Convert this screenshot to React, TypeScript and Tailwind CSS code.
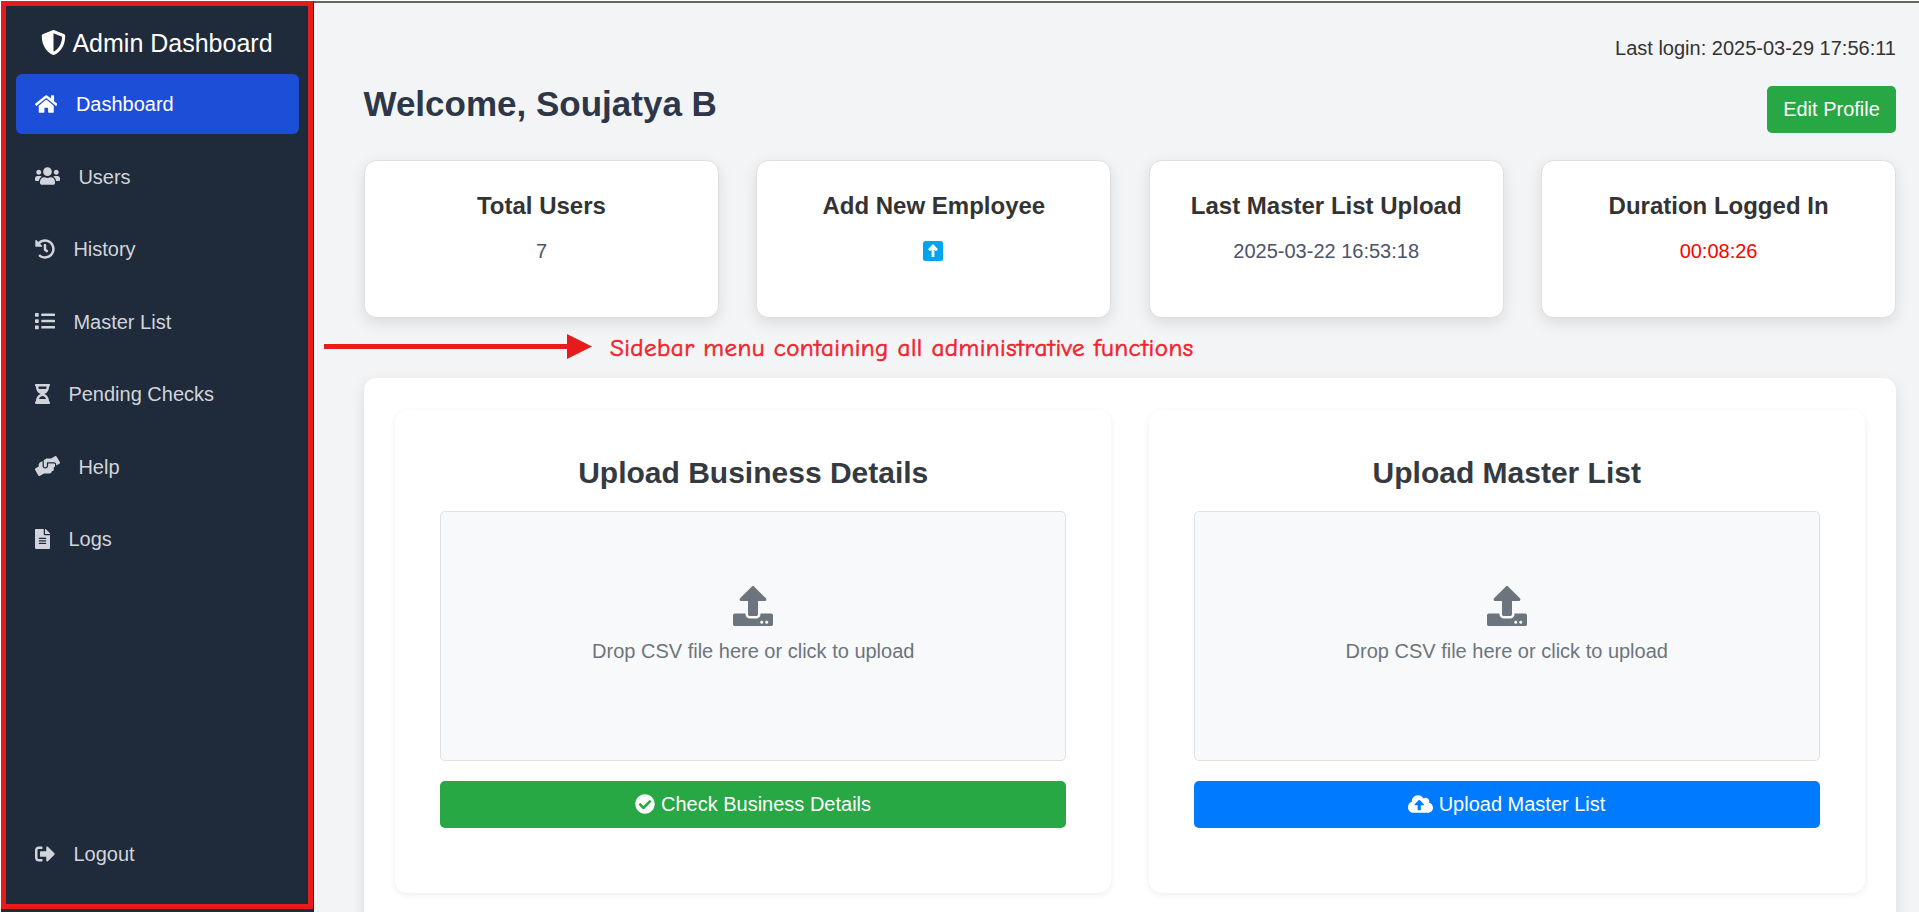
import React from "react";
import {
  FaShieldAlt, FaHome, FaUsers, FaHistory, FaList, FaHourglassHalf,
  FaHandsHelping, FaFileAlt, FaSignOutAlt, FaUpload, FaCheckCircle, FaCloudUploadAlt,
} from "react-icons/fa";
import type { IconType } from "react-icons";

function NavItem({ icon: Icon, width, label, active = false }: { icon: IconType; width: string; label: string; active?: boolean }) {
  return (
    <a className={`flex h-[60px] items-center gap-[18.9px] rounded-[6px] pl-[18.5px] ${active ? "bg-[#1d4ed8] text-white" : "text-[#d1d5db]"}`}>
      <Icon className={`mb-px h-5 shrink-0 ${width}`} />
      <span className="leading-[30px]">{label}</span>
    </a>
  );
}

function StatCard({ title, children }: { title: string; children: React.ReactNode }) {
  return (
    <div className="flex h-[158px] flex-col items-center rounded-[12.5px] border border-[#dfdfdf] bg-white pt-[30px] shadow-[0_5px_15px_rgba(0,0,0,0.1)]">
      <h3 className="text-[24px] leading-[30px] font-bold text-[#333]">{title}</h3>
      <div className="mt-[15px] flex h-[30px] items-center leading-[30px] text-[#4a5568]">{children}</div>
    </div>
  );
}

function UploadCard({ title, children, color }: { title: string; children: React.ReactNode; color: string }) {
  return (
    <section className="h-[483px] rounded-[12.5px] bg-white px-[45px] pt-[45px] shadow-[0_2px_6px_rgba(0,0,0,0.07)]">
      <h2 className="text-center text-[30px] leading-[36px] font-bold text-[#343a40]">{title}</h2>
      <div className="mt-5 flex h-[250px] flex-col items-center rounded-[5px] border border-[#dee2e6] bg-[#f8f9fa] pt-[74px] text-[#6c757d]">
        <FaUpload className="size-10" />
        <p className="mt-[10px] leading-[30px]">{"Drop CSV file here or click to upload"}</p>
      </div>
      <button className={`mt-5 flex h-[47px] w-full items-center justify-center gap-[5.5px] rounded-[5px] text-white ${color}`}>
        {children}
      </button>
    </section>
  );
}

export default function App() {
  return (
    <div className="h-[912px] overflow-hidden bg-white pt-px pl-px font-['Liberation_Sans',Arial,sans-serif] text-[20px] text-[#212529]">
      <div className="relative flex h-[911px]">
        <aside className="relative flex w-[313px] shrink-0 flex-col bg-[#1f2a3a] px-[15px] pt-[23px] pb-7">
          <div className="flex h-[38px] items-center justify-center gap-[6px] pr-px text-[25px] text-white">
            <FaShieldAlt className="mb-px size-[25px]" />
            <span className="pt-[2px]">Admin Dashboard</span>
          </div>
          <nav className="mt-3 flex flex-1 flex-col gap-[12.5px]">
            <NavItem icon={FaHome} width="w-[22.5px]" label="Dashboard" active />
            <NavItem icon={FaUsers} width="w-[25px]" label="Users" />
            <NavItem icon={FaHistory} width="w-[20px]" label="History" />
            <NavItem icon={FaList} width="w-[20px]" label="Master List" />
            <NavItem icon={FaHourglassHalf} width="w-[15px]" label="Pending Checks" />
            <NavItem icon={FaHandsHelping} width="w-[25px]" label="Help" />
            <NavItem icon={FaFileAlt} width="w-[15px]" label="Logs" />
          </nav>
          <NavItem icon={FaSignOutAlt} width="w-[20px]" label="Logout" />
          <div className="pointer-events-none absolute top-0 left-0 h-[908px] w-[312px] border-[5px] border-[#e61c1c]" />
        </aside>

        <main className="flex-1 border-t-2 border-[#646864] bg-[#f3f4f6] pr-[23px] pl-[50px]">
          <p className="pt-[29.5px] text-right leading-[30px] text-[#333]">Last login: 2025-03-29 17:56:11</p>
          <div className="mt-[20px] flex h-[53px] items-start justify-between">
            <h1 className="-ml-[0.5px] text-[35px] leading-[42px] font-bold text-[#2d3748]">Welcome, Soujatya B</h1>
            <button className="mt-[3px] h-[47px] w-[129px] shrink-0 rounded-[5px] bg-[#28a745] text-white">Edit Profile</button>
          </div>
          <div className="mt-6 grid grid-cols-4 gap-[37.5px]">
            <StatCard title="Total Users">7</StatCard>
            <StatCard title="Add New Employee">
              <svg viewBox="0 0 20 20" className="mr-px size-5" aria-label="Add">
                <rect width="20" height="20" rx="2.5" fill="#00a4ef" />
                <path d="M10 16V5.5M6 9.2 10 5l4 4.2" fill="none" stroke="#fff" strokeWidth="2.8" />
              </svg>
            </StatCard>
            <StatCard title="Last Master List Upload">2025-03-22 16:53:18</StatCard>
            <StatCard title="Duration Logged In"><span className="text-[#ff0000]">00:08:26</span></StatCard>
          </div>
          <div className="mt-[60px] grid h-[640px] grid-cols-2 gap-[37.5px] rounded-[12.5px] bg-white px-[31.25px] pt-8 shadow-[0_5px_15px_rgba(0,0,0,0.1)]">
            <UploadCard title="Upload Business Details" color="bg-[#28a745]">
              <FaCheckCircle className="size-5" />
              <span>Check Business Details</span>
            </UploadCard>
            <UploadCard title="Upload Master List" color="bg-[#007bff]">
              <FaCloudUploadAlt className="h-5 w-[25px]" />
              <span>Upload Master List</span>
            </UploadCard>
          </div>
        </main>

        <div className="pointer-events-none absolute top-[333px] left-[323px] flex h-[25px] items-center">
          <svg viewBox="0 0 268 25" className="h-[25px] w-[268px]">
            <path d="M0 10h243V0l25 12.5L243 25V15H0z" fill="#e61c1c" />
          </svg>
          <span className="ml-[18px] pt-px text-[25px] leading-[25px] tracking-[0.44px] whitespace-nowrap text-[#f0242c] [-webkit-text-stroke:0.6px_#f0242c] font-['Comic_Sans_MS','Comic_Neue',Inter,sans-serif] [font-feature-settings:'cv11']">
            Sidebar menu containing all administrative functions
          </span>
        </div>
      </div>
    </div>
  );
}
